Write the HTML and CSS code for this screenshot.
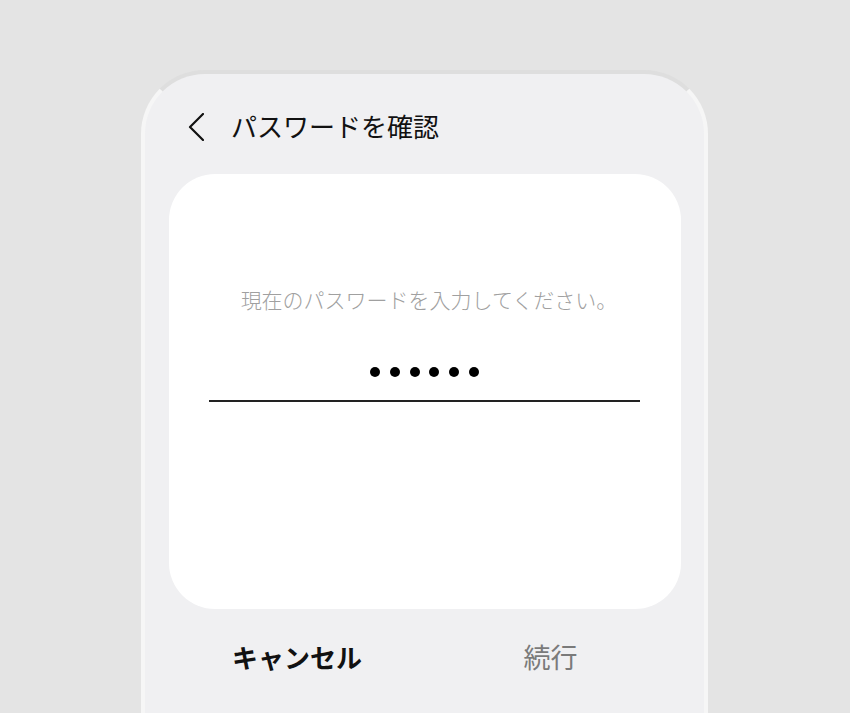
FILE: index.html
```html
<!DOCTYPE html>
<html lang="ja">
<head>
    <meta charset="UTF-8">
    <meta name="viewport" content="width=device-width, initial-scale=1.0">
    <title>パスワードを確認</title>
    <link rel="stylesheet" href="styles.css">
</head>
<body>
    <div class="phone">
        <div class="header">
            <svg class="back" width="16" height="28" viewBox="0 0 16 28">
                <path d="M15 1 L2 14 L15 27" fill="none" stroke="#111" stroke-width="2.2" stroke-linecap="round" stroke-linejoin="round"/>
            </svg>
            <h1 class="title">パスワードを確認</h1>
        </div>
        <div class="card">
            <p class="prompt">現在のパスワードを入力してください。</p>
            <div class="dots">
                <span></span><span></span><span></span><span></span><span></span><span></span>
            </div>
            <div class="underline"></div>
        </div>
        <div class="actions">
            <button class="action cancel">キャンセル</button>
            <button class="action next">続行</button>
        </div>
    </div>
</body>
</html>
```

FILE: styles.css
```css
body, html {
    margin: 0;
    height: 100%;
    overflow: hidden;
    background-color: #e4e4e4;
    font-family: "Noto Sans CJK JP", "Noto Sans", sans-serif;
}
.phone {
    width: 567px;
    height: 643px;
    margin: 70px 0 0 141px;
    box-sizing: border-box;
    background-color: #f0f0f2;
    border: 4px solid #f6f6f6;
    border-top-color: #dedede;
    border-bottom: none;
    border-radius: 64px 64px 0 0;
    padding: 0 23px 0 24px;
}
.header {
    display: flex;
    align-items: center;
    height: 100px;
    box-sizing: border-box;
    padding: 4px 0 0 19px;
}
.back {
    display: block;
    margin-top: 2px;
}
.title {
    margin: 0 0 0 27px;
    font-size: 26px;
    font-weight: normal;
    color: #111;
    line-height: 36px;
}
.card {
    background-color: #ffffff;
    border-radius: 46px;
    height: 435px;
    padding: 110px 41px 0 40px;
    box-sizing: border-box;
}
.prompt {
    margin: 0;
    padding-left: 9px;
    text-align: center;
    font-size: 21px;
    font-weight: 300;
    line-height: 30px;
    color: #a0a0a0;
}
.dots {
    display: flex;
    justify-content: center;
    gap: 9.8px;
    margin-top: 53px;
}
.dots span {
    width: 10px;
    height: 10px;
    border-radius: 50%;
    background-color: #000;
}
.underline {
    margin-top: 23px;
    height: 2px;
    background-color: #222;
}
.actions {
    display: grid;
    grid-template-columns: 1fr 1fr;
    margin-top: 30px;
}
.action {
    background: transparent;
    border: none;
    padding: 0;
    font-family: inherit;
    font-size: 26px;
    line-height: 36px;
    cursor: pointer;
}
.cancel {
    color: #111;
    font-weight: bold;
}
.next {
    color: #7a7a7a;
    font-size: 27px;
    padding-right: 5px;
}
```
